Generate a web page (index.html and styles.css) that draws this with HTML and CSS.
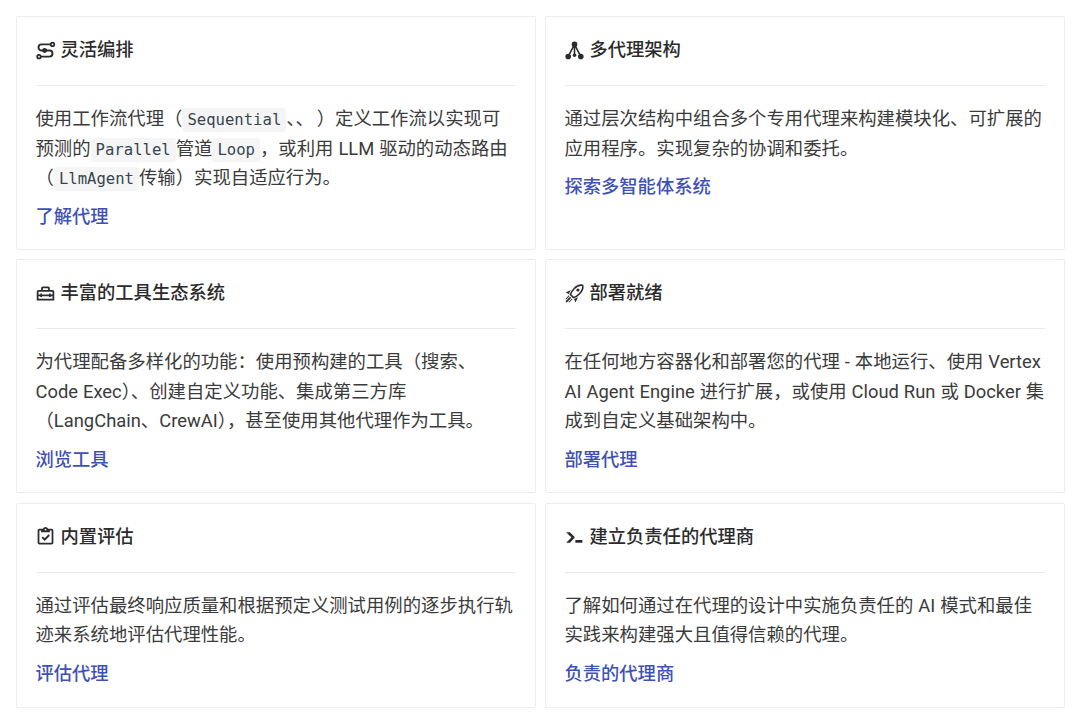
FILE: index.html
```html
<!DOCTYPE html>
<html lang="zh">
<head>
<meta charset="utf-8">
<title>Cards</title>
<link rel="stylesheet" href="styles.css">
</head>
<body>
<div class="grid">
  <section class="card">
    <h3 class="title"><svg class="icon" viewBox="0 0 24 24"><path d="M18 5H7.500a3.500 3.500 0 0 0 0 7h9a3.500 3.500 0 0 1 0 7H6.500" fill="none" stroke="currentColor" stroke-width="2.200"/><circle cx="20" cy="5" r="2" fill="#fff" stroke="currentColor" stroke-width="2"/><circle cx="11" cy="12" r="2.800" fill="currentColor"/><circle cx="4.500" cy="19" r="2" fill="#fff" stroke="currentColor" stroke-width="2"/></svg>灵活编排</h3>
    <hr class="rule">
    <p class="text">使用工作流代理（<code class="code">Sequential</code>、、<span class="gap">）</span>定义工作流以实现可预测的<code class="code">Parallel</code>管道<code class="code">Loop</code>，或利用 LLM 驱动的动态路由（<code class="code">LlmAgent</code>传输）实现自适应行为。</p>
    <a class="link" href="#">了解代理</a>
  </section>
  <section class="card">
    <h3 class="title"><svg class="icon" viewBox="0 0 24 24"><path d="M12 5L5 18.500M12 5L19 18.500M12 5V17" fill="none" stroke="currentColor" stroke-width="1.800"/><circle cx="12" cy="5" r="3.200" fill="currentColor"/><circle cx="4.800" cy="18.800" r="3.200" fill="currentColor"/><circle cx="19.200" cy="18.800" r="3.200" fill="currentColor"/><circle cx="12" cy="17.500" r="2" fill="currentColor"/></svg>多代理架构</h3>
    <hr class="rule">
    <p class="text">通过层次结构中组合多个专用代理来构建模块化、可扩展的应用程序。实现复杂的协调和委托。</p>
    <a class="link" href="#">探索多智能体系统</a>
  </section>
  <section class="card">
    <h3 class="title"><svg class="icon" viewBox="0 0 24 24"><path fill="currentColor" d="M20 8H17V6C17 4.900 16.100 4 15 4H9C7.900 4 7 4.900 7 6V8H4C2.900 8 2 8.900 2 10V20H22V10C22 8.900 21.100 8 20 8M9 6H15V8H9V6M20 18H4V15H6V16H8V15H16V16H18V15H20V18M18 13V12H16V13H8V12H6V13H4V10H20V13H18Z"/></svg>丰富的工具生态系统</h3>
    <hr class="rule">
    <p class="text">为代理配备多样化的功能：使用预构建的工具（搜索、<span class="nowrap">Code Exec</span>）、创建自定义功能、集成第三方库<span class="nowrap">（LangChain</span>、CrewAI），甚至使用其他代理作为工具。</p>
    <a class="link" href="#">浏览工具</a>
  </section>
  <section class="card">
    <h3 class="title"><svg class="icon" viewBox="0 0 24 24"><path d="M21.300 2.700C21.300 2.700 16.500 1.500 11.500 6.500C9 9 7.800 11.500 7.300 13.200L10.800 16.700C12.500 16.200 15 15 17.500 12.500C22.500 7.500 21.300 2.700 21.300 2.700Z" fill="none" stroke="currentColor" stroke-width="1.800"/><circle cx="15.900" cy="8" r="1.800" fill="currentColor"/><path fill="currentColor" d="M13.130 22.190L11.500 18.360C13.070 17.780 14.540 17 15.900 16.090L13.130 22.190M5.640 12.500L1.810 10.870L7.910 8.100C7 9.460 6.220 10.930 5.640 12.500M6.240 22L9.880 18.360C9.540 18.270 9.210 18.120 8.910 17.910L4.830 22H6.240M2 22H3.410L8.180 17.240L6.760 15.830L2 20.590V22M2 19.170L6.090 15.090C5.880 14.790 5.730 14.470 5.640 14.120L2 17.760V19.170Z"/></svg>部署就绪</h3>
    <hr class="rule">
    <p class="text">在任何地方容器化和部署您的代理 - 本地运行、使用 Vertex AI Agent Engine 进行扩展，或使用 Cloud Run 或 Docker 集成到自定义基础架构中。</p>
    <a class="link" href="#">部署代理</a>
  </section>
  <section class="card">
    <h3 class="title"><svg class="icon" viewBox="0 0 24 24"><path fill="currentColor" d="M19,3H14.820C14.400,1.840 13.300,1 12,1C10.700,1 9.600,1.840 9.180,3H5A2,2 0 0,0 3,5V19A2,2 0 0,0 5,21H19A2,2 0 0,0 21,19V5A2,2 0 0,0 19,3M12,3A1,1 0 0,1 13,4A1,1 0 0,1 12,5A1,1 0 0,1 11,4A1,1 0 0,1 12,3M7,7H17V5H19V19H5V5H7V7M7.500,13.500L9,12L11,14L15.500,9.500L17,11L11,17L7.500,13.500Z"/></svg>内置评估</h3>
    <hr class="rule">
    <p class="text">通过评估最终响应质量和根据预定义测试用例的逐步执行轨迹来系统地评估代理性能。</p>
    <a class="link" href="#">评估代理</a>
  </section>
  <section class="card">
    <h3 class="title"><svg class="icon" viewBox="0 0 24 24"><path fill="currentColor" d="M13 19V16H21V19H13M8.500 13L2.470 7H6.710L11.670 11.950C12.250 12.540 12.250 13.500 11.670 14.070L6.740 19H2.500L8.500 13Z"/></svg>建立负责任的代理商</h3>
    <hr class="rule">
    <p class="text">了解如何通过在代理的设计中实施负责任的 AI 模式和最佳实践来构建强大且值得信赖的代理。</p>
    <a class="link" href="#">负责的代理商</a>
  </section>
</div>
</body>
</html>
```
FILE: styles.css
```css
* { box-sizing: border-box; }
html, body { margin: 0; background: #fff; }
body {
  font-family: "Roboto", "Noto Sans CJK SC", sans-serif;
  color: #3b3b3b;
  height: 717px;
  overflow: hidden;
}
.grid {
  display: grid;
  grid-template-columns: 520px 520px;
  grid-template-rows: 233.500px 233.500px 205px;
  column-gap: 9px;
  row-gap: 9.800px;
  padding: 16px 0 0 16px;
}
.card {
  border: 1px solid #ebedef;
  border-radius: 2px;
  padding: 19px 19px 0 18.500px;
  display: flex;
  flex-direction: column;
  align-items: flex-start;
}
.title {
  margin: 0;
  display: flex;
  align-items: center;
  gap: 5px;
  font-size: 18.300px;
  font-weight: 500;
  line-height: 28px;
  color: #2b2b2b;
  height: 28px;
}
.icon { width: 21px; height: 21px; flex: none; margin-left: -1px; }
.rule {
  width: 100%;
  height: 1px;
  border: 0;
  background: #e9eaec;
  margin: 21px 0 18px;
}
.text {
  margin: 0;
  font-size: 18.360px;
  line-height: 29.500px;
  word-spacing: 0.400px;
}
.gap { margin-left: 12px; }
.nowrap { white-space: nowrap; }
.code {
  font-family: "DejaVu Sans Mono", "Liberation Mono", monospace;
  font-size: 15.600px;
  line-height: 1;
  background: #f5f5f5;
  color: #36464e;
  padding: 3px 5px;
  border-radius: 3px;
}
.link {
  margin-top: 9px;
  font-size: 18.300px;
  font-weight: 500;
  line-height: 29.500px;
  color: #4051b5;
  text-decoration: none;
}
```
